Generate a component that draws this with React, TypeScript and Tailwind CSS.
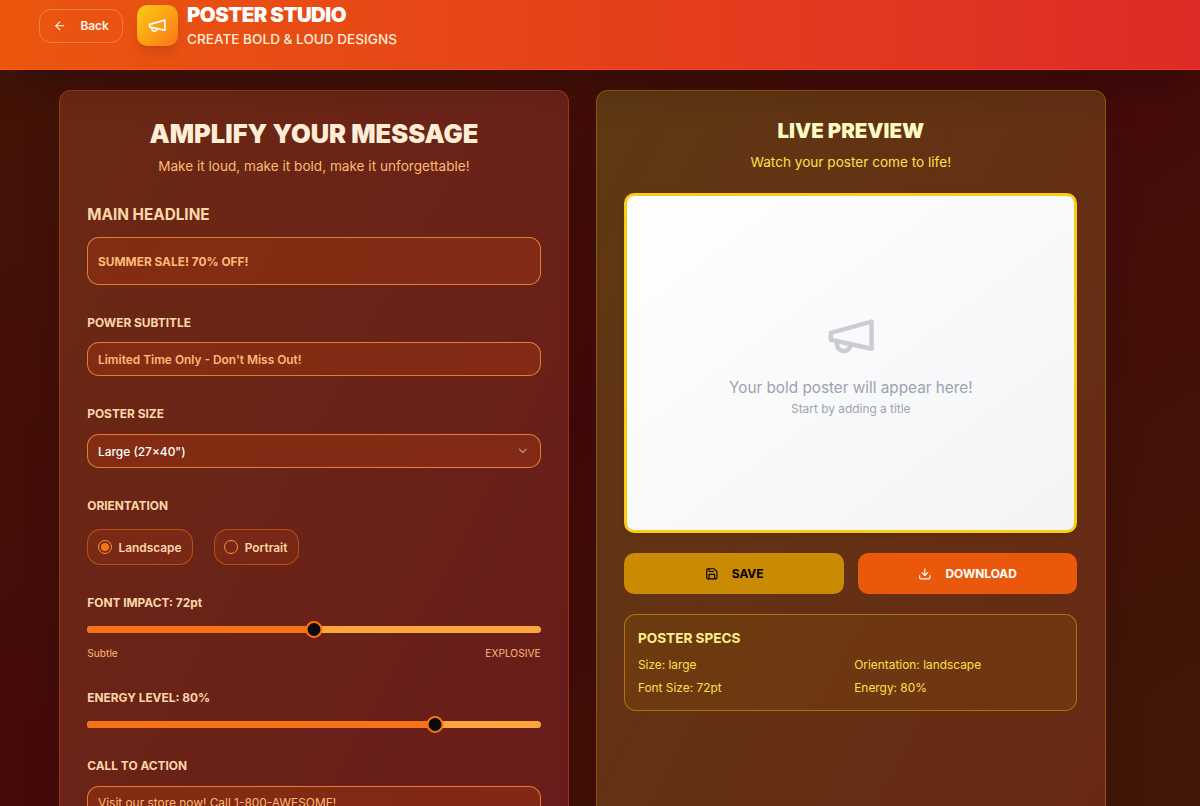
import { useState } from "react";
import { ArrowLeft, ChevronDown, Download, Save } from "lucide-react";

const labelClass = "block text-sm leading-[26px] font-bold text-[#fed7aa]";
const fieldClass =
  "w-full rounded-[14px] border border-[#fb923c]/80 bg-[#9a3412]/50 px-[11.5px] text-sm text-white placeholder:text-[#fdba74] outline-none";

function Megaphone({ className, strokeWidth = 2 }: { className?: string; strokeWidth?: number }) {
  return (
    <svg viewBox="0 0 24 24" fill="none" stroke="currentColor" strokeWidth={strokeWidth} strokeLinecap="round" strokeLinejoin="round" className={className}>
      <path d="m3 11 18-5v12L3 14v-3z" />
      <path d="M11.6 16.8a3 3 0 1 1-5.8-1.6" />
    </svg>
  );
}

function Slider({ percent }: { percent: number }) {
  return (
    <div className="relative mt-3.5 h-2 rounded-full bg-[#fba63c]">
      <div className="h-2 rounded-full bg-[#f97316]" style={{ width: `${percent}%` }} />
      <div
        className="absolute -top-1.5 size-5 -translate-x-1/2 rounded-full border-[2.4px] border-[#f97316] bg-[#0a0a0a]"
        style={{ left: `calc(${percent}% + ${10 - percent * 0.2}px)` }}
      />
    </div>
  );
}

function Radio({ label, checked, onSelect }: { label: string; checked: boolean; onSelect: () => void }) {
  return (
    <button
      type="button"
      onClick={onSelect}
      className="flex h-[42px] items-center gap-2 rounded-2xl border border-[#f97316]/50 bg-[#9a3412]/30 pr-[12.5px] pl-[11.5px]"
    >
      <span className="flex size-4 items-center justify-center rounded-full border border-[#fb923c]">
        {checked && <span className="size-[9px] rounded-full bg-[#f97316]" />}
      </span>
      <span className="text-sm font-semibold text-[#fed7aa]">{label}</span>
    </button>
  );
}

export default function App() {
  const [orientation, setOrientation] = useState("landscape");
  const fontSize = 72;
  const energy = 80;

  return (
    <div className="h-screen overflow-hidden bg-linear-to-br from-[#431407] via-[#450a0a] to-[#421707] font-['Inter',sans-serif]">
      <div className="[zoom:0.85]">
        <header className="relative h-[82px] border-b border-[#f97316]/30 bg-linear-to-r from-[#ea560d] via-[#e6401a] to-[#dd2a26] shadow-[0_25px_50px_-12px_rgba(0,0,0,0.25)]">
          <div className="mx-[45.5px] flex h-[60px] items-center gap-4">
            <button className="flex h-10 w-[99px] items-center gap-4 rounded-[14px] border border-white/25 pl-4 text-sm font-semibold text-[#fff7ed]">
              <ArrowLeft className="size-4" />
              Back
            </button>
            <div className="ml-px flex size-12 items-center justify-center rounded-xl bg-linear-to-br from-[#facc15] to-[#f97316] text-white shadow-lg">
              <Megaphone className="size-6" />
            </div>
            <div className="-ml-[5.5px]">
              <h1 className="mb-px text-2xl leading-[31px] font-black tracking-tight text-white">POSTER STUDIO</h1>
              <p className="font-medium text-[#ffedd5]">CREATE BOLD &amp; LOUD DESIGNS</p>
            </div>
          </div>
        </header>

        <main className="mr-[111px] ml-[69.5px] grid h-[1150px] grid-cols-2 gap-8 pt-[23.6px]">
          <section className="rounded-[14px] border border-[#f97316]/30 bg-linear-to-br from-[#6b2913] to-[#691a1c] bg-origin-border p-8 shadow-[0_25px_50px_-12px_rgba(0,0,0,0.25)]">
            <div className="mb-[31.5px] text-center">
              <h2 className="mb-[7.5px] text-3xl leading-[37px] font-black text-[#ffedd5]">AMPLIFY YOUR MESSAGE</h2>
              <p className="leading-6 text-[#fdba74]">Make it loud, make it bold, make it unforgettable!</p>
            </div>

            <div className="space-y-8">
              <div>
                <label className="mb-3 block text-lg leading-7 font-bold text-[#fed7aa]">MAIN HEADLINE</label>
                <input className={`${fieldClass} block h-14 pt-px font-bold`} placeholder="SUMMER SALE! 70% OFF!" />
              </div>
              <div>
                <label className={`${labelClass} mb-2.5`}>POWER SUBTITLE</label>
                <input className={`${fieldClass} block h-10 font-semibold`} placeholder="Limited Time Only - Don't Miss Out!" />
              </div>
              <div>
                <label className={`${labelClass} mb-2.5`}>POSTER SIZE</label>
                <button className={`${fieldClass} flex h-10 items-center justify-between font-medium`}>
                  Large (27×40")
                  <ChevronDown className="size-4 opacity-50" />
                </button>
              </div>
              <div>
                <label className={labelClass}>ORIENTATION</label>
                <div className="mt-3.5 flex gap-6">
                  <Radio label="Landscape" checked={orientation === "landscape"} onSelect={() => setOrientation("landscape")} />
                  <Radio label="Portrait" checked={orientation === "portrait"} onSelect={() => setOrientation("portrait")} />
                </div>
              </div>
              <div>
                <label className={labelClass}>FONT IMPACT: {fontSize}pt</label>
                <Slider percent={50} />
                <div className="mt-[16.5px] -mb-[0.5px] flex justify-between text-xs text-[#fdba74]">
                  <span>Subtle</span>
                  <span>EXPLOSIVE</span>
                </div>
              </div>
              <div>
                <label className={labelClass}>ENERGY LEVEL: {energy}%</label>
                <Slider percent={((energy - 10) / 90) * 100} />
              </div>
              <div>
                <label className={`${labelClass} mb-2.5`}>CALL TO ACTION</label>
                <textarea className={`${fieldClass} block h-24 resize-none py-2`} placeholder="Visit our store now! Call 1-800-AWESOME!" />
              </div>
            </div>
          </section>

          <section className="rounded-[14px] border border-[#eab308]/30 bg-linear-to-br from-[#5f3813] to-[#692614] bg-origin-border p-8 shadow-[0_25px_50px_-12px_rgba(0,0,0,0.25)]">
            <div className="mb-6 text-center">
              <h2 className="mb-[9px] text-2xl leading-[31px] font-black text-[#fef9c3]">LIVE PREVIEW</h2>
              <p className="leading-6 text-[#fde047]">Watch your poster come to life!</p>
            </div>

            <div className="mb-6 flex aspect-4/3 flex-col items-center justify-center rounded-xl border-4 border-[#facc15] bg-linear-to-br from-white to-[#f3f4f6] text-[#9ca3af] shadow-[0_2px_6px_rgba(0,0,0,0.1)]">
              <Megaphone className="mb-4 size-16 opacity-50" />
              <p className="text-lg leading-7">Your bold poster will appear here!</p>
              <p className="text-sm">Start by adding a title</p>
            </div>

            <div className="mb-6 grid grid-cols-2 gap-4">
              <button className="flex h-12 items-center justify-center gap-4 rounded-xl bg-[#ca8a04] text-sm font-bold text-black">
                <Save className="size-4" />
                SAVE
              </button>
              <button className="flex h-12 items-center justify-center gap-4 rounded-xl bg-[#ea580c] text-sm font-bold text-white">
                <Download className="size-4" />
                DOWNLOAD
              </button>
            </div>

            <div className="rounded-[14px] border border-[#eab308]/50 bg-[#854d0e]/30 px-[15px] py-[15.5px]">
              <h3 className="mb-2 leading-6 font-bold text-[#fef08a]">POSTER SPECS</h3>
              <div className="grid grid-cols-2 gap-2 text-sm text-[#fde047]">
                <div>Size: large</div>
                <div>Orientation: {orientation}</div>
                <div>Font Size: {fontSize}pt</div>
                <div>Energy: {energy}%</div>
              </div>
            </div>
          </section>
        </main>
      </div>
    </div>
  );
}
